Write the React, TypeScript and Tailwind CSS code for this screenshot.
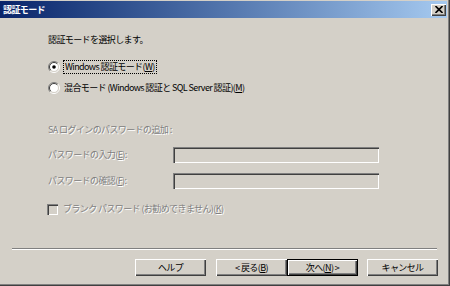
import type { ReactNode } from "react";

const FONT = "font-['Noto_Sans_CJK_JP',sans-serif]";
const DIS = "text-[#808080] [text-shadow:1px_1px_0_#ffffff]";

function Radio({ checked }: { checked?: boolean }) {
  return (
    <svg width="12" height="12" viewBox="0 0 12 12" className="shrink-0">
      <circle cx="6" cy="6" r="4.5" fill="#ffffff" />
      <path d="M2.1 9.9 A5.5 5.5 0 0 1 9.9 2.1" stroke="#808080" fill="none" />
      <path d="M9.9 2.1 A5.5 5.5 0 0 1 2.1 9.9" stroke="#ffffff" fill="none" />
      <path d="M2.8 9.2 A4.5 4.5 0 0 1 9.2 2.8" stroke="#404040" fill="none" />
      <path d="M9.2 2.8 A4.5 4.5 0 0 1 2.8 9.2" stroke="#d4d0c8" fill="none" />
      {checked && <circle cx="6" cy="6" r="1.8" fill="#000000" />}
    </svg>
  );
}

function Sunken({ className }: { className: string }) {
  return (
    <div
      className={`bg-[#d4d0c8] shadow-[inset_1px_1px_0_#808080,inset_2px_2px_0_#404040,inset_-1px_-1px_0_#ffffff,inset_-2px_-2px_0_#d4d0c8] ${className}`}
    />
  );
}

function Button({ children, def }: { children: ReactNode; def?: boolean }) {
  return (
    <div
      className={`w-[71px] h-[17px] flex items-center justify-center bg-[#d4d0c8] text-black ${
        def
          ? "border border-black shadow-[inset_1px_1px_0_#ffffff,inset_-1px_-1px_0_#404040,inset_-2px_-2px_0_#808080]"
          : "shadow-[inset_1px_1px_0_#ffffff,inset_-1px_-1px_0_#404040,inset_-2px_-2px_0_#808080]"
      }`}
    >
      {children}
    </div>
  );
}

export default function App() {
  return (
    <div
      className={`w-[450px] h-[286px] bg-[#d4d0c8] flex flex-col pt-px pr-[3px] text-[9px] leading-[12px] tracking-[-0.6px] ${FONT} shadow-[inset_-1px_-1px_0_#404040,inset_-2px_-2px_0_#808080]`}
    >
      {/* タイトルバー */}
      <div className="h-[17px] flex items-center justify-between pl-[3px] pr-[1px] bg-gradient-to-r from-[#0a246a] to-[#a6caf0]">
        <span className="text-white font-bold">認証モード</span>
        <div className="w-[15px] h-[12px] flex items-center justify-center bg-[#d4d0c8] shadow-[inset_1px_1px_0_#ffffff,inset_-1px_-1px_0_#404040,inset_-2px_-2px_0_#808080]">
          <svg width="8" height="7" viewBox="0 0 8 7">
            <path d="M0.5 0 L7.5 7 M7.5 0 L0.5 7" stroke="#000" strokeWidth="1.6" />
          </svg>
        </div>
      </div>

      <div className="pl-[48px] flex flex-col text-black">
        <p className="mt-[16px]">認証モードを選択します。</p>

        <div className="mt-[13px] h-[16px] flex items-center gap-[3px]">
          <Radio checked />
          <span className="px-px border border-dotted border-black leading-[12px]">
            Windows 認証モード(<span className="underline">W</span>)
          </span>
        </div>
        <div className="mt-[5px] h-[16px] flex items-center gap-[4px]">
          <Radio />
          <span>
            混合モード (Windows 認証と SQL Server 認証)(<span className="underline">M</span>)
          </span>
        </div>

        <p className={`mt-[28px] ${DIS}`}>SA ログインのパスワードの追加 :</p>

        <div className="mt-[11px] h-[16px] flex items-center">
          <span className={`w-[125px] ${DIS}`}>
            パスワードの入力(<span className="underline">E</span>):
          </span>
          <Sunken className="w-[206px] h-[16px]" />
        </div>
        <div className="mt-[10px] h-[16px] flex items-center">
          <span className={`w-[125px] ${DIS}`}>
            パスワードの確認(<span className="underline">F</span>):
          </span>
          <Sunken className="w-[206px] h-[16px]" />
        </div>

        <div className="mt-[12px] h-[16px] flex items-center gap-[5px]">
          <Sunken className="w-[11px] h-[11px] -ml-px" />
          <span className={DIS}>
            ブランク パスワード (お勧めできません)(<span className="underline">K</span>)
          </span>
        </div>
      </div>

      <div className="mt-[31px] ml-[12px] w-[425px] h-[2px] border-t border-t-[#808080] border-b border-b-white" />

      <div className="mt-[9px] flex justify-end pr-[9px]">
        <Button>ヘルプ</Button>
        <div className="ml-[10px] flex">
          <Button>&lt; 戻る(<span className="underline">B</span>)</Button>
          <Button def>
            次へ(<span className="underline">N</span>) &gt;
          </Button>
        </div>
        <div className="ml-[9px]">
          <Button>キャンセル</Button>
        </div>
      </div>
    </div>
  );
}
